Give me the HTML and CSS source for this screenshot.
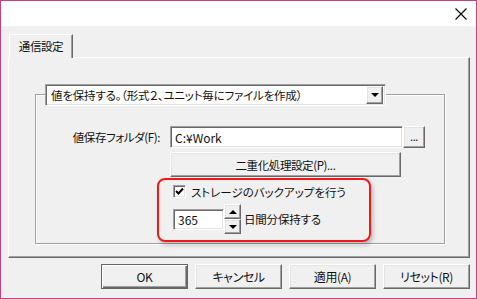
FILE: index.html
```html
<!DOCTYPE html>
<html lang="ja">
<head>
    <meta charset="UTF-8">
    <title>通信設定</title>
    <link rel="stylesheet" href="styles.css">
</head>
<body>
    <div class="window">
        <div class="titlebar">
            <svg class="close" width="12" height="12" viewBox="0 0 12 12">
                <path d="M0.5 0.5 L11.5 11.5 M11.5 0.5 L0.5 11.5" stroke="#000" stroke-width="1.1" fill="none"/>
            </svg>
        </div>

        <div class="tabs">
            <div class="tab">通信設定</div>
        </div>

        <div class="panel">
            <div class="group">
                <div class="combo field">
                    <span class="combo-text">値を保持する。（形式２、ユニット毎にファイルを作成）</span>
                    <span class="combo-btn btn"><span class="tri-down"></span></span>
                </div>

                <div class="row folder-row">
                    <label class="row-label">値保存フォルダ(F):</label>
                    <div class="field path">C:¥Work</div>
                    <button class="btn browse">...</button>
                </div>

                <button class="btn dual">二重化処理設定(P)...</button>

                <div class="row check-row">
                    <span class="checkbox field">
                        <svg width="9" height="9" viewBox="0 0 9 9">
                            <path d="M1 4 L3.5 6.5 L8 1.5" stroke="#000" stroke-width="2" fill="none"/>
                        </svg>
                    </span>
                    <span class="check-label">ストレージのバックアップを行う</span>
                </div>

                <div class="row spin-row">
                    <div class="field days">365</div>
                    <div class="spin">
                        <span class="btn spin-btn"><span class="tri-up"></span></span>
                        <span class="btn spin-btn"><span class="tri-down"></span></span>
                    </div>
                    <span class="days-label">日間分保持する</span>
                </div>

                <div class="highlight"></div>
            </div>
        </div>

        <div class="actions">
            <button class="btn action default">OK</button>
            <button class="btn action">キャンセル</button>
            <button class="btn action">適用(A)</button>
            <button class="btn action">リセット(R)</button>
        </div>
    </div>
</body>
</html>
```

FILE: styles.css
```css
*, *::after, *::before{
    margin: 0;
    padding: 0;
    box-sizing: border-box;
}
:root {
    --bg: #f0f0f0;
    --dark: #696969;
    --mid: #a0a0a0;
    --light: #e3e3e3;
}

body{
    width: 477px;
    height: 299px;
    overflow: hidden;
    font-family: "Noto Sans CJK JP", "Noto Sans", sans-serif;
    font-size: 11.5px;
    letter-spacing: -0.4px;
    font-feature-settings: "palt";
    color: #111;
}
.window{
    width: 477px;
    height: 299px;
    border: 1px solid #c8407e;
    background-color: var(--bg);
    display: flex;
    flex-direction: column;
}
.titlebar{
    height: 25px;
    background-color: #fff;
    display: flex;
    align-items: center;
    justify-content: flex-end;
    padding-right: 9px;
    padding-top: 1px;
}

/* raised / sunken 3d edges */
.btn{
    background-color: var(--bg);
    border: 1px solid;
    border-color: #fff var(--dark) var(--dark) #fff;
    box-shadow: inset -1px -1px 0 var(--mid), inset 1px 1px 0 var(--light);
    font: inherit;
    letter-spacing: inherit;
    font-feature-settings: "palt";
    color: inherit;
    display: flex;
    align-items: center;
    justify-content: center;
}
.field{
    background-color: #fff;
    border: 1px solid;
    border-color: var(--mid) #fff #fff var(--mid);
    box-shadow: inset 1px 1px 0 var(--dark), inset -1px -1px 0 var(--light);
}

.tabs{
    margin: 8px 0 -1px 8px;
    display: flex;
    position: relative;
    z-index: 1;
}
.tab{
    width: 64px;
    height: 24px;
    padding-top: 3px;
    text-align: center;
    background-color: var(--bg);
    border-left: 1px solid #fff;
    border-top: 1px solid #fff;
    border-right: 1px solid var(--dark);
    box-shadow: inset -1px 0 0 var(--mid);
}

.panel{
    margin-left: 7px;
    width: 462px;
    height: 201px;
    border: 1px solid;
    border-color: #fff var(--dark) var(--dark) #fff;
    box-shadow: inset -1px -1px 0 var(--mid);
    padding: 36px 0 0 26px;
}
.group{
    position: relative;
    width: 410px;
    height: 150px;
    border: 1px solid var(--mid);
    box-shadow: 1px 1px 0 #fff, inset 1px 1px 0 #fff;
    display: flex;
    flex-direction: column;
    align-items: flex-start;
}

.combo{
    margin: -11px 0 0 9px;
    width: 341px;
    height: 22px;
    display: flex;
    align-items: center;
    padding: 2px 2px 2px 5px;
}
.combo-text{
    flex: 1;
    line-height: 16px;
    letter-spacing: -0.2px;
}
.combo-btn{
    width: 17px;
    height: 18px;
}
.tri-down, .tri-up{
    width: 0;
    height: 0;
    border-left: 4px solid transparent;
    border-right: 4px solid transparent;
}
.tri-down{
    border-top: 4px solid #000;
}
.tri-up{
    border-bottom: 4px solid #000;
}

.row{
    display: flex;
    align-items: center;
}
.folder-row{
    margin-top: 20px;
}
.row-label{
    width: 124px;
    margin-right: 10px;
    text-align: right;
}
.path{
    width: 233px;
    height: 22px;
    padding: 2px 4px;
    line-height: 17px;
    font-size: 12px;
    letter-spacing: 0;
}
.browse{
    width: 22px;
    height: 22px;
    font-size: 11px;
    padding-bottom: 3px;
}
.dual{
    margin: 4px 0 0 134px;
    width: 231px;
    height: 25px;
}

.check-row{
    margin: 8px 0 0 137px;
    height: 13px;
}
.checkbox{
    width: 13px;
    height: 13px;
    margin-right: 5px;
    display: flex;
    align-items: center;
    justify-content: center;
}
.check-label{
    letter-spacing: 0;
}
.spin-row{
    margin: 6px 0 0 137px;
}
.days{
    width: 51px;
    height: 21px;
    padding: 2px 4px;
    line-height: 16px;
    font-size: 12px;
    letter-spacing: 0;
}
.spin{
    display: flex;
    flex-direction: column;
}
.spin-btn{
    width: 17px;
    height: 15px;
}
.days-label{
    margin-left: 3px;
    letter-spacing: -0.2px;
}

/* red annotation frame */
.highlight{
    position: absolute;
    left: 121px;
    top: 83px;
    width: 214px;
    height: 64px;
    border: 2px solid #f01818;
    border-radius: 8px;
    box-shadow: 2px 3px 4px rgba(0, 0, 0, 0.22);
}

.actions{
    margin: 6px 6px 0 0;
    display: flex;
    justify-content: flex-end;
    gap: 7px;
}
.action{
    width: 87px;
    height: 25px;
    font-size: 12px;
}
.default{
    border: 1px solid #646464;
    box-shadow: inset 1px 1px 0 #fff, inset -1px -1px 0 var(--dark), inset -2px -2px 0 var(--mid);
}
```
